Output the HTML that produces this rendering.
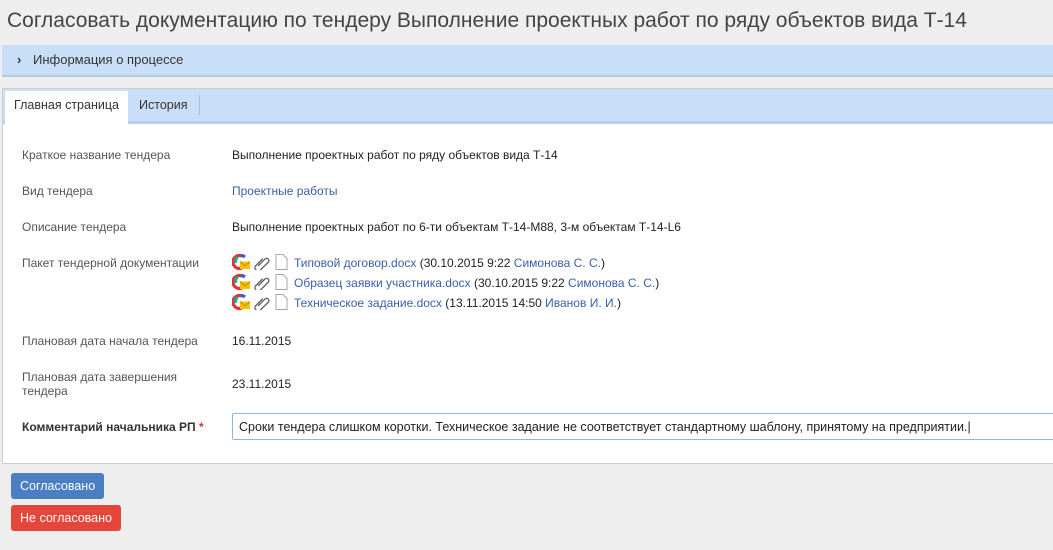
<!DOCTYPE html>
<html><head><meta charset="utf-8"><style>
body{margin:0;background:#eeeeee;font-family:"Liberation Sans",Arial,sans-serif;width:1053px;height:550px;overflow:hidden;position:relative;color:#333}
.title{position:absolute;left:7px;top:9px;font-size:21px;color:#444;white-space:nowrap}
.info{position:absolute;left:2px;top:45px;width:1051px;height:30px;background:#c9dff7;border-bottom:2px solid #b5cbe3;font-size:13px;line-height:30px}
.info span{position:absolute;left:31px}
.info b{position:absolute;left:15px;top:0;font-size:13px}
.panel{position:absolute;left:2px;top:88px;width:1051px;height:374px;background:#fff;border:1px solid #ccc;border-right:none}
.tabs{position:absolute;left:0;top:0;width:1051px;height:32px;background:#c9dff7;border-bottom:3px solid #b9d0ea}
.tab{position:absolute;top:2px;height:33px;font-size:12.5px;line-height:28px}
.t1{left:2px;width:123px;background:#fff;text-align:center}
.t2{left:136px}
.sep{position:absolute;left:196px;top:6px;width:1px;height:20px;background:#a9bfd8}
.row{position:absolute;font-size:12px}
.lbl{left:19px;color:#555}
.val{left:229px;color:#222}
a{color:#3a5fa8;text-decoration:none}
.ic{display:inline-block;vertical-align:-3px;margin-right:4px}
.btn{position:absolute;left:11px;height:26px;line-height:26px;color:#fff;font-size:12.5px;padding:0 9px;border-radius:3px}
</style></head><body>
<div class="title">Согласовать документацию по тендеру Выполнение проектных работ по ряду объектов вида Т-14</div>
<div class="info"><b>›</b><span>Информация о процессе</span></div>
<div class="panel">
<div class="tabs"><div class="tab t1">Главная страница</div><div class="tab t2">История</div><div class="sep"></div></div>
<div class="row lbl" style="top:59px">Краткое название тендера</div><div class="row val" style="top:59px">Выполнение проектных работ по ряду объектов вида Т-14</div>
<div class="row lbl" style="top:95px">Вид тендера</div><div class="row val" style="top:95px"><a>Проектные работы</a></div>
<div class="row lbl" style="top:131px">Описание тендера</div><div class="row val" style="top:131px">Выполнение проектных работ по 6-ти объектам Т-14-М88, 3-м объектам Т-14-L6</div>
<div class="row lbl" style="top:167px">Пакет тендерной документации</div>
<div class="row val" style="top:164px;line-height:20px">
<div><svg class="ic" width="58" height="17"><path d="M10 3a6.5 6.5 0 1 0 0 12" stroke="#d33" stroke-width="3.2" fill="none"/><path d="M3.5 10a6.5 6.5 0 0 1 2-6" stroke="#2a8" stroke-width="3.2" fill="none"/><path d="M13 4a6.5 6.5 0 0 0-4-1.5" stroke="#36c" stroke-width="3.2" fill="none"/><rect x="8" y="8.5" width="10" height="7.5" fill="#f5c400"/><path d="M8 8.5l5 4.5 5-4.5" stroke="#b80" fill="none"/><path d="M26 13l7-7a2.2 2.2 0 0 1 3.2 3.2l-8 8a3.2 3.2 0 0 1-4.5-4.5l7-7" stroke="#666" stroke-width="1.4" fill="none"/><path d="M44 1.5h7l4 4v11h-11z" stroke="#aaa" fill="#fff"/></svg><a>Типовой договор.docx</a> (30.10.2015 9:22 <a>Симонова С. С.</a>)</div>
<div><svg class="ic" width="58" height="17"><path d="M10 3a6.5 6.5 0 1 0 0 12" stroke="#d33" stroke-width="3.2" fill="none"/><path d="M3.5 10a6.5 6.5 0 0 1 2-6" stroke="#2a8" stroke-width="3.2" fill="none"/><path d="M13 4a6.5 6.5 0 0 0-4-1.5" stroke="#36c" stroke-width="3.2" fill="none"/><rect x="8" y="8.5" width="10" height="7.5" fill="#f5c400"/><path d="M8 8.5l5 4.5 5-4.5" stroke="#b80" fill="none"/><path d="M26 13l7-7a2.2 2.2 0 0 1 3.2 3.2l-8 8a3.2 3.2 0 0 1-4.5-4.5l7-7" stroke="#666" stroke-width="1.4" fill="none"/><path d="M44 1.5h7l4 4v11h-11z" stroke="#aaa" fill="#fff"/></svg><a>Образец заявки участника.docx</a> (30.10.2015 9:22 <a>Симонова С. С.</a>)</div>
<div><svg class="ic" width="58" height="17"><path d="M10 3a6.5 6.5 0 1 0 0 12" stroke="#d33" stroke-width="3.2" fill="none"/><path d="M3.5 10a6.5 6.5 0 0 1 2-6" stroke="#2a8" stroke-width="3.2" fill="none"/><path d="M13 4a6.5 6.5 0 0 0-4-1.5" stroke="#36c" stroke-width="3.2" fill="none"/><rect x="8" y="8.5" width="10" height="7.5" fill="#f5c400"/><path d="M8 8.5l5 4.5 5-4.5" stroke="#b80" fill="none"/><path d="M26 13l7-7a2.2 2.2 0 0 1 3.2 3.2l-8 8a3.2 3.2 0 0 1-4.5-4.5l7-7" stroke="#666" stroke-width="1.4" fill="none"/><path d="M44 1.5h7l4 4v11h-11z" stroke="#aaa" fill="#fff"/></svg><a>Техническое задание.docx</a> (13.11.2015 14:50 <a>Иванов И. И.</a>)</div>
</div>
<div class="row lbl" style="top:245px">Плановая дата начала тендера</div><div class="row val" style="top:245px">16.11.2015</div>
<div class="row lbl" style="top:281px;line-height:14px">Плановая дата завершения<br>тендера</div><div class="row val" style="top:288px">23.11.2015</div>
<div class="row" style="left:19px;top:331px;font-weight:bold;color:#333">Комментарий начальника РП <span style="color:#d33">*</span></div>
<div style="position:absolute;left:229px;top:324px;width:830px;height:27px;border:1px solid #8fb8de;border-radius:2px;font-size:12.5px;line-height:27px;padding-left:6px;box-sizing:border-box;color:#222">Сроки тендера слишком коротки. Техническое задание не соответствует стандартному шаблону, принятому на предприятии.|</div>
</div>
<div class="btn" style="top:473px;background:#4a7fc4">Согласовано</div>
<div class="btn" style="top:505px;background:#e5463a">Не согласовано</div>
</body></html>
